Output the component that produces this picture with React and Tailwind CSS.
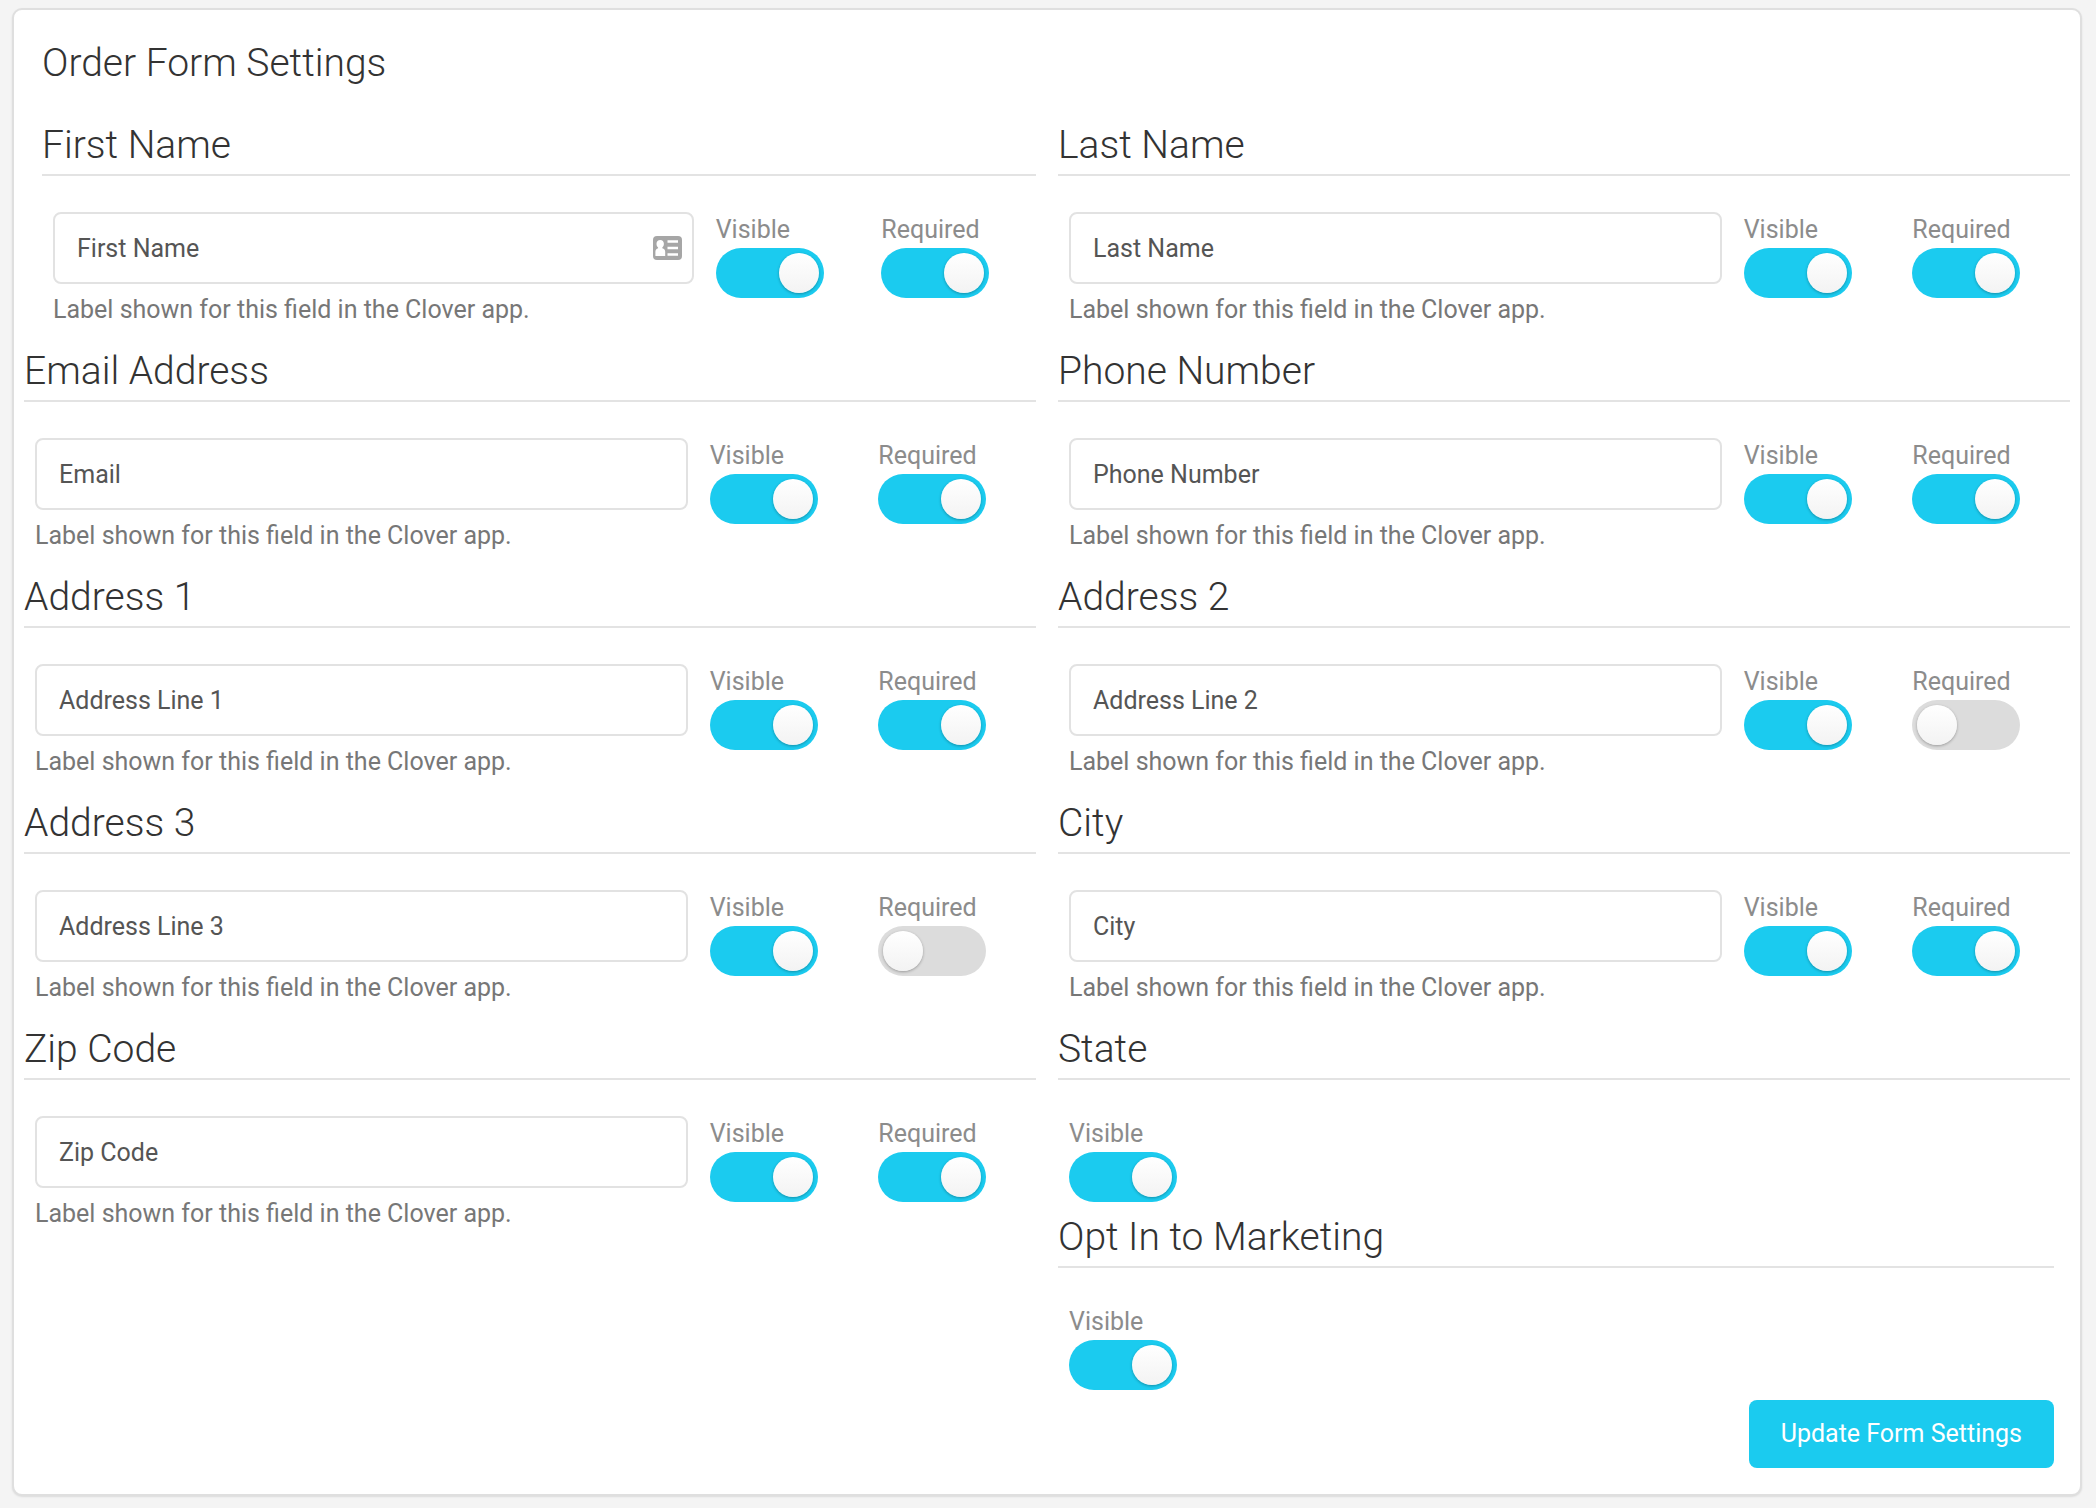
import { useState } from 'react';
import clsx from 'clsx';

const fields = [
    { id: 'first-name', title: 'First Name', label: 'First Name', visible: true, required: true, autofill: true, className: 'lg:pl-[18px]' },
    { id: 'last-name', title: 'Last Name', label: 'Last Name', visible: true, required: true },
    { id: 'email', title: 'Email Address', label: 'Email', visible: true, required: true },
    { id: 'phone', title: 'Phone Number', label: 'Phone Number', visible: true, required: true },
    { id: 'address-1', title: 'Address 1', label: 'Address Line 1', visible: true, required: true },
    { id: 'address-2', title: 'Address 2', label: 'Address Line 2', visible: true, required: false },
    { id: 'address-3', title: 'Address 3', label: 'Address Line 3', visible: true, required: false },
    { id: 'city', title: 'City', label: 'City', visible: true, required: true },
    { id: 'zip', title: 'Zip Code', label: 'Zip Code', visible: true, required: true },
];

function ContactCardIcon() {
    return (
        <svg viewBox="0 0 29 24" className="w-[29px] h-6" aria-hidden="true">
            <rect width="29" height="24" rx="4" fill="#a6a6a6" />
            <path
                fill="#fff"
                d="M7.2 4c2.2 0 3.7 1.5 3.7 3.7 0 1.6-.6 3-1.6 3.8v.7c1.9.5 2.9 1.6 2.9 3.5V20H2.4v-4.3c0-1.9 1-3 2.7-3.5v-.7C4.1 10.7 3.5 9.3 3.5 7.7 3.5 5.5 5 4 7.200 4zM14.5 4.2H25v2.600H14.500zM14.500 10.700H25v2.600H14.500zM14.500 17.200H25v2.600H14.500z"
            />
        </svg>
    );
}

function Toggle({ id, label, defaultOn }) {
    const [on, setOn] = useState(defaultOn);

    return (
        <div className="flex flex-col items-start px-[11px]">
            <label htmlFor={id} className="text-[25px] leading-9 text-[#8c8c8c]">{label}</label>
            <input
                id={id}
                type="checkbox"
                checked={on}
                onChange={(e) => setOn(e.target.checked)}
                className="appearance-none shrink-0 w-[108px] h-[50px] p-[5px] rounded-full cursor-pointer bg-[#dcdcdc] checked:bg-[#1bcbef] before:block before:size-10 before:rounded-full before:bg-linear-to-b before:from-white before:to-[#f3f3f3] before:shadow-[0_1px_3px_rgba(0,0,0,0.3)] checked:before:ml-auto"
            />
        </div>
    );
}

function SectionTitle({ children }) {
    return (
        <h2 className="h-[66px] pt-[15px] border-b-2 border-[#e3e3e3] text-[39px] leading-10 font-light text-[#333]">
            {children}
        </h2>
    );
}

function FieldSettings({ field }) {
    return (
        <section className={field.className}>
            <SectionTitle>
                <label htmlFor={field.id}>{field.title}</label>
            </SectionTitle>
            <div className="grid grid-cols-2 xl:grid-cols-6 pt-9">
                <div className="col-span-2 xl:col-span-4 px-[11px]">
                    <div className="relative">
                        <input
                            id={field.id}
                            type="text"
                            defaultValue={field.label}
                            aria-describedby={`${field.id}-help`}
                            className="block w-full h-[72px] px-[22px] rounded-lg border-2 border-[#e2e2e2] bg-white text-[25px] text-[#555] outline-none focus:border-[#1bcbef]"
                        />
                        {field.autofill && (
                            <span className="absolute inset-y-0 right-3 flex items-center">
                                <ContactCardIcon />
                            </span>
                        )}
                    </div>
                    <p id={`${field.id}-help`} className="py-2 text-[25px] leading-9 text-[#777]">
                        Label shown for this field in the Clover app.
                    </p>
                </div>
                <Toggle id={`${field.id}-visible`} label="Visible" defaultOn={field.visible} />
                <Toggle id={`${field.id}-required`} label="Required" defaultOn={field.required} />
            </div>
        </section>
    );
}

function VisibilitySettings({ id, title, className }) {
    return (
        <section className={clsx(className)}>
            <SectionTitle>{title}</SectionTitle>
            <div className="pt-9">
                <Toggle id={`${id}-visible`} label="Visible" defaultOn />
            </div>
        </section>
    );
}

export default function App() {
    return (
        <main className="min-h-screen bg-[#f4f4f4] pt-2 pb-3 pl-3 pr-[14px] font-['Roboto',sans-serif]">
            <form
                onSubmit={(e) => e.preventDefault()}
                className="bg-white border-2 border-[#dfdfdf] rounded-[10px] shadow-[0_1px_2px_rgba(0,0,0,0.1)] px-2.5 pb-[26px]"
            >
                <h1 className="pl-[18px] pt-[33px] pb-[27px] text-[39px] leading-10 font-light text-[#333]">Order Form Settings</h1>

                <div className="grid grid-cols-1 lg:grid-cols-2 gap-x-[22px]">
                    {fields.map((field) => (
                        <FieldSettings key={field.id} field={field} />
                    ))}
                    {/* Toggle-only fields share the last cell */}
                    <div>
                        <VisibilitySettings id="state" title="State" />
                        <VisibilitySettings id="marketing" title="Opt In to Marketing" className="lg:pr-4" />
                    </div>
                </div>

                <div className="flex justify-end pt-2.5 pr-4">
                    <button type="submit" className="h-[68px] px-8 rounded-lg bg-[#1bcbef] hover:bg-[#17b8d9] text-[25px] text-white cursor-pointer">
                        Update Form Settings
                    </button>
                </div>
            </form>
        </main>
    );
}
